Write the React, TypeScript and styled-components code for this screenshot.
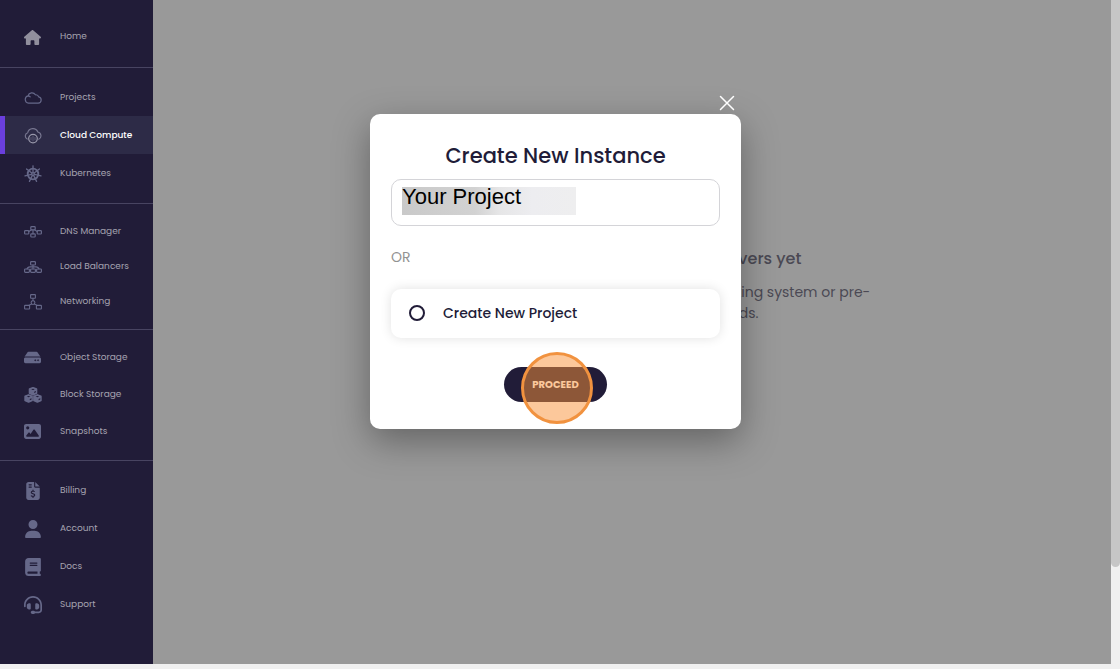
import React from "react";
import styled, { createGlobalStyle } from "styled-components";
import { FaHouse, FaUser, FaImage, FaBook, FaHeadset, FaFileInvoiceDollar } from "react-icons/fa6";
import { FaHdd } from "react-icons/fa";

const GlobalStyle = createGlobalStyle`
  * { box-sizing: border-box; }
  body { margin: 0; background: #f0f0f0; color: #211c38; font-family: Poppins, Inter, "Liberation Sans", sans-serif; }
  h1, h2, p { margin: 0; }
`;

const Window = styled.div`
  display: flex;
  height: 100vh;
  padding-bottom: 5px;
  background: #f0f0f0;
`;

const Sidebar = styled.nav`
  flex: 0 0 153px;
  background: #211c38;
  overflow: hidden;
`;

const Group = styled.div<{ $row: number; $top?: number; $bottom?: number }>`
  padding: ${(p) => p.$top ?? 10}px 0 ${(p) => p.$bottom ?? 10}px;
  border-bottom: 1px solid #484461;
  a { height: ${(p) => p.$row}px; }
  &:last-child { border-bottom: 0; }
`;

const Item = styled.a<{ $active?: boolean }>`
  display: flex;
  align-items: center;
  gap: 18px;
  padding-left: 18px;
  border-left: 5px solid ${(p) => (p.$active ? "#6a3fdd" : "transparent")};
  background: ${(p) => (p.$active ? "#2d2b47" : "transparent")};
  color: ${(p) => (p.$active ? "#ffffff" : "#a5a3b0")};
  font-size: 9px;
  font-weight: ${(p) => (p.$active ? 500 : 400)};
  line-height: 14px;
  text-decoration: none;
  white-space: nowrap;
`;

const IconBox = styled.span<{ $light?: boolean }>`
  display: flex;
  justify-content: center;
  width: 19px;
  padding-top: 2px;
  color: ${(p) => (p.$light ? "#918f9d" : "#666889")};
`;

const Main = styled.main`
  flex: 1;
  display: flex;
  justify-content: center;
  padding-top: 246px;
  background: #999999;
`;

const Empty = styled.section`
  text-align: center;
  color: #4b4954;
`;

const EmptyTitle = styled.h2`
  font-size: 16px;
  font-weight: 500;
  line-height: 26px;
`;

const EmptyText = styled.p`
  margin-top: 10px;
  font-size: 14px;
  line-height: 21px;
  white-space: nowrap;
`;

const ScrollTrack = styled.div`
  flex: 0 0 9px;
  background: #f0f0f0;
`;

const ScrollThumb = styled.div`
  height: 85.4%;
  background: #c6c6c6;
  border-radius: 0 0 5px 5px;
`;

const Overlay = styled.div`
  position: absolute;
  inset: 0 9px 5px 0;
  display: flex;
  flex-direction: column;
  align-items: center;
  padding-top: 95px;
`;

const Dialog = styled.div`
  width: 371px;
`;

const CloseRow = styled.div`
  display: flex;
  justify-content: flex-end;
  height: 19px;
  padding-right: 6px;
`;

const CloseButton = styled.button`
  display: flex;
  height: 16px;
  padding: 0;
  border: 0;
  background: none;
  color: #ffffff;
`;

const Card = styled.form`
  display: flex;
  flex-direction: column;
  padding: 26px 21px 27px;
  border-radius: 10px;
  background: #ffffff;
  box-shadow: 0 12px 36px rgba(0, 0, 0, 0.35);
`;

const Title = styled.h1`
  font-size: 21px;
  font-weight: 500;
  line-height: 32px;
  text-align: center;
`;

const ProjectField = styled.label`
  display: flex;
  align-items: flex-start;
  height: 47px;
  margin-top: 7px;
  padding: 7px 10px;
  border: 1px solid #d4d4d8;
  border-radius: 10px;
`;

const ProjectInput = styled.input`
  width: 174px;
  height: 28px;
  padding: 0 0 8px;
  border: 0;
  background: linear-gradient(90deg, #c9c9c9 0%, #d2d2d2 42%, #e6e6e7 56%, #ededf0 75%, #eeeeef 100%);
  color: #000000;
  font: 22px/20px "Liberation Sans", sans-serif;
`;

const Divider = styled.p`
  margin-top: 21px;
  color: #929292;
  font-size: 14px;
  line-height: 20px;
`;

const Choice = styled.label`
  display: flex;
  align-items: center;
  gap: 18px;
  height: 49px;
  margin-top: 22px;
  padding: 0 18px 2px;
  border-radius: 10px;
  box-shadow: 0 0 12px rgba(0, 0, 0, 0.12);
  font-size: 14px;
  font-weight: 500;
  line-height: 20px;
`;

const Radio = styled.input`
  appearance: none;
  width: 16px;
  height: 16px;
  margin: 0;
  border: 2px solid #211c38;
  border-radius: 50%;
`;

const Proceed = styled.button`
  position: relative;
  align-self: center;
  width: 103px;
  height: 35px;
  margin-top: 29px;
  padding: 0;
  border: 0;
  border-radius: 18px;
  background: #211c38;
  color: #ffffff;
  font: 700 10px/15px Poppins, Inter, sans-serif;
`;

const ClickMarker = styled.span`
  position: absolute;
  top: -15px;
  left: 17px;
  width: 72px;
  height: 72px;
  border: 3px solid #f1923f;
  border-radius: 50%;
  background: rgba(249, 145, 55, 0.5);
`;

const line = { fill: "none", stroke: "currentColor", strokeLinecap: "round", strokeLinejoin: "round" } as const;

const CloudIcon = () => (
  <svg width="18" height="12" viewBox="0 0 18 12" {...line}>
    <path d="M4.5 11.2h9.7a3.2 3.2 0 0 0 .5-6.3 3 3 0 0 0-3.3-2.1A4.1 4.1 0 0 0 4 3.8a3.8 3.8 0 0 0 .5 7.4ZM4 3.8c.9 0 1.7.4 2.2 1" strokeWidth="1.2" />
  </svg>
);

const ComputeIcon = () => (
  <svg width="18" height="16" viewBox="0 0 18 16" {...line}>
    <path d="M3.2 11A3.4 3.4 0 0 1 3.7 4.7 5.3 5.3 0 0 1 13.8 4a3.8 3.8 0 0 1 .9 7.2" stroke="#777690" strokeWidth="1.2" />
    <circle cx="9" cy="10.6" r="4.3" stroke="#9897aa" strokeWidth="1.2" />
    <path d="M9 8v5M7 9.5v2.5M11 9.5v2.5" stroke="#666580" strokeWidth=".8" />
  </svg>
);

const WheelIcon = () => (
  <svg width="18" height="18" viewBox="0 0 18 18" {...line}>
    <circle cx="9" cy="9" r="5.3" strokeWidth="1.8" />
    <circle cx="9" cy="9" r="1.3" strokeWidth="1.2" />
    {[0, 1, 2, 3, 4, 5, 6].map((n) => (
      <path key={n} d="M9 7.5V.8" strokeWidth="1.3" transform={`rotate(${(n * 360) / 7} 9 9)`} />
    ))}
  </svg>
);

const DnsIcon = () => (
  <svg width="18" height="12" viewBox="0 0 18 12" {...line} strokeWidth="1.2">
    <rect x="6.8" y=".7" width="4.4" height="3.2" rx=".8" />
    <rect x="6.8" y="7.8" width="4.4" height="3.2" rx=".8" />
    <rect x=".6" y="4.6" width="4.2" height="3.4" rx=".8" />
    <rect x="13.2" y="4.6" width="4.2" height="3.4" rx=".8" />
    <path d="M9 4v3.8M4.8 5.6 7.2 4M13.2 5.6 10.8 4" />
  </svg>
);

const BalancerIcon = () => (
  <svg width="18" height="12" viewBox="0 0 18 12" {...line} strokeWidth="1.2">
    <rect x="6.6" y=".6" width="4.8" height="3.4" rx=".8" />
    <rect x=".6" y="8" width="4.8" height="3.4" rx=".8" />
    <rect x="6.6" y="8" width="4.8" height="3.4" rx=".8" />
    <rect x="12.6" y="8" width="4.8" height="3.4" rx=".8" />
    <path d="M9 4v4M3 8c.4-1.6 1.4-2.2 3-2.2h6c1.6 0 2.6.6 3 2.2" />
  </svg>
);

const NetworkIcon = () => (
  <svg width="18" height="16" viewBox="0 0 18 16" {...line} strokeWidth="1.1">
    <rect x="6.6" y=".6" width="4.8" height="3.6" rx=".5" />
    <rect x=".6" y="11.4" width="5" height="3.6" rx=".5" />
    <rect x="12.4" y="11.4" width="5" height="3.6" rx=".5" />
    <circle cx="9" cy="8.6" r="1.9" />
    <path d="M9 4.2v2.5M7.6 9.900l-2.900 1.500M10.400 9.900l2.900 1.500" />
  </svg>
);

const CubesIcon = () => (
  <svg width="18" height="16" viewBox="0 0 18 16">
    {[[9, 4.2], [4.6, 11.4], [13.4, 11.4]].map(([x, y]) => (
      <g key={x} transform={`translate(${x} ${y})`}>
        <path
          d="M0-3.400 3.400-2v4L0 3.400-3.400 2v-4Z"
          fill="currentColor"
          stroke="currentColor"
          strokeWidth="1.800"
          strokeLinejoin="round"
        />
        <path d="M-1.800-1.800 0-2.500l1.800.7L0-1.100ZM1.200 1.900V.6l1.700-.8v1.300Z" fill="#211c38" />
      </g>
    ))}
  </svg>
);

type Entry = { label: string; icon: React.ReactNode; active?: boolean; light?: boolean };
type Section = { row: number; top?: number; bottom?: number; entries: Entry[] };

const sections: Section[] = [
  { row: 38, top: 17, bottom: 12, entries: [{ label: "Home", icon: <FaHouse size={17} />, light: true }] },
  {
    row: 38,
    bottom: 11,
    entries: [
      { label: "Projects", icon: <CloudIcon /> },
      { label: "Cloud Compute", icon: <ComputeIcon />, active: true },
      { label: "Kubernetes", icon: <WheelIcon /> },
    ],
  },
  {
    row: 35,
    top: 9,
    bottom: 11,
    entries: [
      { label: "DNS Manager", icon: <DnsIcon /> },
      { label: "Load Balancers", icon: <BalancerIcon /> },
      { label: "Networking", icon: <NetworkIcon /> },
    ],
  },
  {
    row: 37,
    top: 8,
    bottom: 11,
    entries: [
      { label: "Object Storage", icon: <FaHdd size={17} /> },
      { label: "Block Storage", icon: <CubesIcon /> },
      { label: "Snapshots", icon: <FaImage size={17} /> },
    ],
  },
  {
    row: 38,
    entries: [
      { label: "Billing", icon: <FaFileInvoiceDollar size={18} /> },
      { label: "Account", icon: <FaUser size={18} /> },
      { label: "Docs", icon: <FaBook size={18} /> },
      { label: "Support", icon: <FaHeadset size={18} /> },
    ],
  },
];

export default function App() {
  return (
    <>
      <GlobalStyle />
      <Window>
        <Sidebar aria-label="Main">
          {sections.map((s) => (
            <Group key={s.entries[0].label} $row={s.row} $top={s.top} $bottom={s.bottom}>
              {s.entries.map((e) => (
                <Item key={e.label} href="#" $active={e.active}>
                  <IconBox $light={e.light}>{e.icon}</IconBox>
                  {e.label}
                </Item>
              ))}
            </Group>
          ))}
        </Sidebar>
        <Main>
          <Empty>
            <EmptyTitle>You have not added any cloud servers yet</EmptyTitle>
            <EmptyText>
              Deploy a cloud server using your preferred operating system or pre-
              <br />
              built application to fit all your needs.
            </EmptyText>
          </Empty>
        </Main>
        <ScrollTrack>
          <ScrollThumb />
        </ScrollTrack>
      </Window>
      <Overlay>
        <Dialog role="dialog" aria-modal="true" aria-labelledby="dialog-title">
          <CloseRow>
            <CloseButton type="button" aria-label="Close">
              <svg width="16" height="16" viewBox="0 0 16 16" {...line} strokeWidth="1.5">
                <path d="M1.5 1.5l13 13M14.5 1.5l-13 13" />
              </svg>
            </CloseButton>
          </CloseRow>
          <Card>
            <Title id="dialog-title">Create New Instance</Title>
            <ProjectField>
              <ProjectInput aria-label="Project" defaultValue="Your Project" />
            </ProjectField>
            <Divider>OR</Divider>
            <Choice>
              <Radio type="radio" name="project" />
              Create New Project
            </Choice>
            <Proceed type="button">
              PROCEED
              <ClickMarker />
            </Proceed>
          </Card>
        </Dialog>
      </Overlay>
    </>
  );
}
